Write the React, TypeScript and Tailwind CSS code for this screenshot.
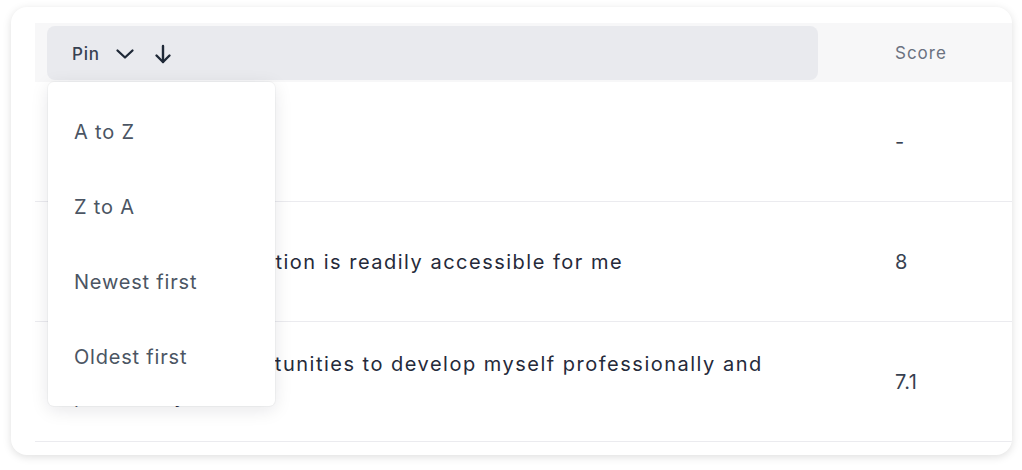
const rows = [
  { text: '', score: '-', pad: 'pl-[39px] pb-0' },
  { text: 'Important information is readily accessible for me', score: '8', pad: 'pl-[46px] pb-0' },
  { text: 'I have many opportunities to develop myself professionally and personally', score: '7.1', pad: 'pl-[39px] pb-[4px]' },
];

const sortOptions = ['A to Z', 'Z to A', 'Newest first', 'Oldest first'];

const ChevronIcon = () => (
  <svg width="20" height="20" viewBox="0 0 20 20" fill="none" stroke="#1f2937" strokeWidth="2.3" strokeLinecap="round" strokeLinejoin="round">
    <path d="M2.5 6.5 10 13.5 17.5 6.5" />
  </svg>
);

const ArrowIcon = () => (
  <svg width="20" height="20" viewBox="0 0 20 20" fill="none" stroke="#1f2937" strokeWidth="2.4" strokeLinecap="round" strokeLinejoin="round">
    <path d="M10 2v16" />
    <path d="M3.5 11.5 10 18 16.5 11.5" />
  </svg>
);

export default function App() {
  return (
    <div className="min-h-screen bg-white pl-[11px] pt-[7px] font-['Inter','Liberation_Sans',sans-serif]">
      <div className="w-[1001px] h-[448px] rounded-2xl bg-white shadow-[0_2px_8px_rgba(0,0,0,0.13)] overflow-hidden pl-6 pt-4">
        <div className="w-[977px]">
          {/* header */}
          <div className="relative flex h-[59px] bg-[#f7f7f8]">
            <div className="w-[783px] pl-3 pt-[3px] pb-[2px]">
              <div className="flex h-full items-center rounded-lg bg-[#e9eaee] pl-[25px]">
                <span className="pt-[3px] text-[17px] font-medium tracking-[0.8px] text-[#374151]">Pin</span>
                <span className="ml-[15px] flex items-center pt-[2px]"><ChevronIcon /></span>
                <span className="ml-[18px] flex items-center pt-[2px]"><ArrowIcon /></span>
              </div>
            </div>
            <div className="flex items-center pl-[77px] pt-[3px] text-[17px] tracking-[1px] text-[#6b7280]">Score</div>

            {/* sort menu */}
            <div className="absolute left-[13px] top-[59px] z-10 w-[227px] rounded-md bg-white py-3 shadow-[0_4px_18px_rgba(15,23,42,0.10),0_0_0_1px_rgba(15,23,42,0.03)]">
              {sortOptions.map((opt) => (
                <div key={opt} className="flex h-[75px] items-center pl-[26px] text-[20px] tracking-[0.8px] text-[#4b5563]">
                  {opt}
                </div>
              ))}
            </div>
          </div>

          {/* body */}
          {rows.map((row) => (
            <div key={row.score} className="flex h-[120px] items-center border-b border-[#ebebef]">
              <div className={`w-[783px] pr-6 text-[20px] leading-8 tracking-[1.5px] text-[#252a3a] ${row.pad}`}>
                {row.text}
              </div>
              <div className="pl-[77px] text-[20px] tracking-[0.5px] text-[#374151]">{row.score}</div>
            </div>
          ))}
        </div>
      </div>
    </div>
  );
}
